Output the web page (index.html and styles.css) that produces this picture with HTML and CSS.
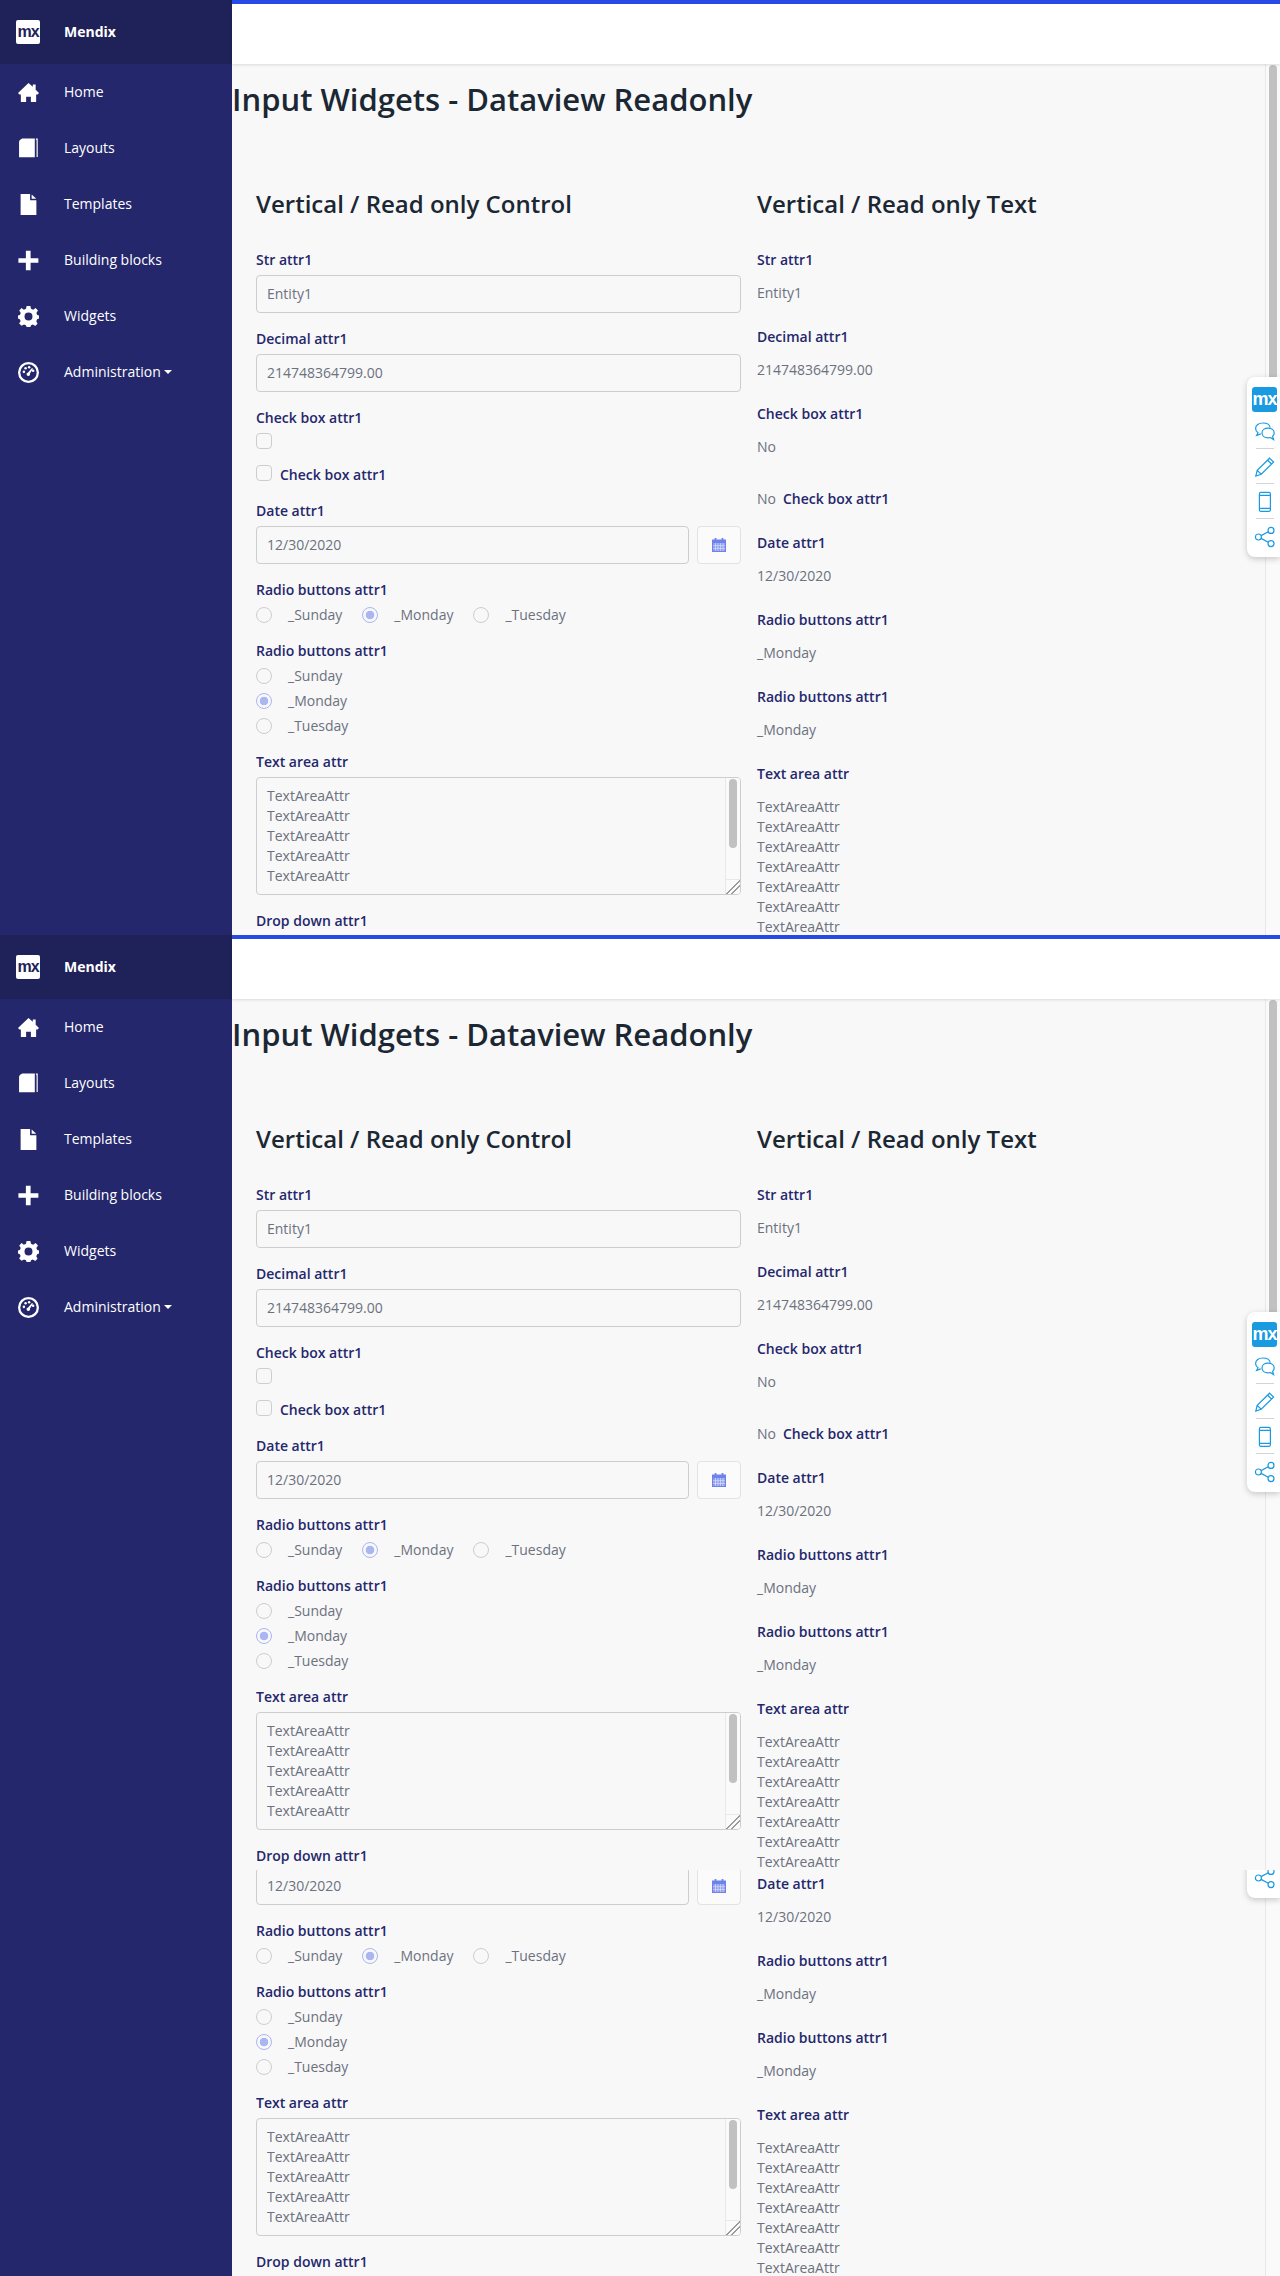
FILE: index.html
```html
<!DOCTYPE html>
<html lang="en">
<head>
<meta charset="utf-8">
<title>Input Widgets - Dataview Readonly</title>
<link rel="stylesheet" href="styles.css">
</head>
<body>
<svg class="defs" width="0" height="0" aria-hidden="true">
  <symbol id="i-home" viewBox="0 0 22 20"><path d="M11 0 L15.5 4 V1.5 H18.5 V7 L22 10.5 L20.5 12 H19 V20 H13.5 V14.5 H8.5 V20 H3 V12 H1.5 L0 10.5 Z"/></symbol>
  <symbol id="i-book" viewBox="0 0 20 20"><path d="M4 0.5 H16 V18.4 H1 V3.6 Q1 1.6 4 0.5 Z"/><path d="M17 0.5 H18.8 V18 H17.7 V1.7 H17 Z"/></symbol>
  <symbol id="i-doc" viewBox="0 0 16 20"><path d="M0.5 0 H9.5 V6 H15.5 V20 H0.5 Z M11 0.4 L15.4 4.6 H11 Z"/></symbol>
  <symbol id="i-plus" viewBox="0 0 20 20"><path d="M7.5 0.6 H12 V7.8 H19.4 V12.2 H12 V19.4 H7.5 V12.2 H0.4 V7.8 H7.5 Z"/></symbol>
  <symbol id="i-gear" viewBox="0 0 20 20"><path fill-rule="evenodd" d="M8.2 0 H11.8 L12.4 2.7 L14.4 3.5 L16.8 2 L19 4.3 L17.5 6.6 L18.3 8.6 L20 9 V12 L18.2 12.6 L17.4 14.5 L18.6 16.8 L16.4 19 L14.2 17.6 L12.4 18.3 L11.8 20 H8.2 L7.6 18.3 L5.7 17.5 L3.4 18.9 L1.1 16.6 L2.5 14.4 L1.7 12.5 L0 12 V9 L1.8 8.5 L2.6 6.6 L1.2 4.4 L3.4 2 L5.6 3.5 L7.6 2.7 Z M10 6.2 A3.8 3.8 0 1 0 10 13.8 A3.8 3.8 0 1 0 10 6.2 Z"/></symbol>
  <symbol id="i-dash" viewBox="0 0 20 20"><path fill-rule="evenodd" d="M10 0 A10 10 0 1 1 10 20 A10 10 0 1 1 10 0 Z M10 2.2 A7.8 7.8 0 1 0 10 17.8 A7.8 7.8 0 1 0 10 2.2 Z"/><circle cx="5.6" cy="9.4" r="1.2"/><circle cx="7.2" cy="6" r="1.2"/><circle cx="10.6" cy="5" r="1.2"/><circle cx="14.4" cy="8.4" r="1.2"/><path d="M13.3 5.7 L14.3 6.4 L11.4 11 A1.7 1.7 0 1 1 9.6 9.9 Z"/></symbol>
  <symbol id="i-cal" viewBox="0 0 14 14"><path fill-rule="evenodd" d="M2.6 0 H4.4 V1.4 H9.6 V0 H11.4 V1.4 H14 V14 H0 V1.4 H2.6 Z M1 5 V13 H13 V5 Z"/><path d="M1 5 H13 V13 H1 Z" opacity=".78"/><path d="M3.5 5 V13 M6 5 V13 M8.5 5 V13 M11 5 V13 M1 7.7 H13 M1 10.4 H13" stroke="#f8f8f8" stroke-width=".5" fill="none"/></symbol>
  <symbol id="i-chat" viewBox="0 0 22 22"><path d="M9 2 C4.6 2 1.6 4.4 1.6 7.6 C1.6 9.4 2.6 10.8 4 11.7 L2.6 14.4 L6.8 12.9 M9 2 C13 2 15.8 3.9 16.2 6.6"/><path d="M14 7.2 C10.6 7.2 8 9.2 8 12 C8 14.8 10.6 16.8 14 16.8 C14.8 16.8 15.6 16.7 16.2 16.5 L19.6 18.6 L18.6 15.4 C19.6 14.5 20.2 13.3 20.2 12 C20.2 9.2 17.6 7.2 14 7.2 Z"/></symbol>
  <symbol id="i-pencil" viewBox="0 0 22 22"><path d="M15.6 2.2 L19.6 6 L7.2 18.2 L1.8 20 L3.2 14.4 Z M13.6 4.2 L17.6 8 M3.2 14.4 L7.2 18.2"/></symbol>
  <symbol id="i-phone" viewBox="0 0 22 22"><rect x="5.4" y="1.4" width="11" height="19" rx="1.6"/><path d="M5.4 4.4 H16.4 M5.4 17.4 H16.4"/></symbol>
  <symbol id="i-share" viewBox="0 0 22 22"><circle cx="4.4" cy="11" r="3"/><circle cx="17" cy="4.4" r="3"/><circle cx="17" cy="17.6" r="3"/><path d="M7.1 9.6 L14.3 5.8 M7.1 12.4 L14.3 16.2"/></symbol>
</svg>

<div class="page">
  <section class="screen">
    <aside class="sidebar">
      <div class="brand"><span class="brand-logo">mx</span><span class="brand-name">Mendix</span></div>
      <nav class="nav">
        <a class="nav-item"><svg class="nav-icon"><use href="#i-home"/></svg>Home</a>
        <a class="nav-item"><svg class="nav-icon"><use href="#i-book"/></svg>Layouts</a>
        <a class="nav-item"><svg class="nav-icon"><use href="#i-doc"/></svg>Templates</a>
        <a class="nav-item"><svg class="nav-icon"><use href="#i-plus"/></svg>Building blocks</a>
        <a class="nav-item"><svg class="nav-icon"><use href="#i-gear"/></svg>Widgets</a>
        <a class="nav-item"><svg class="nav-icon"><use href="#i-dash"/></svg>Administration<span class="caret"></span></a>
      </nav>
    </aside>
    <div class="main">
      <header class="topbar"></header>
      <div class="body">
        <main class="content">
          <h1 class="title">Input Widgets - Dataview Readonly</h1>
          <div class="columns columns-head">
            <div class="col">
              <h2 class="heading">Vertical / Read only Control</h2>
              <div class="field"><label class="label">Str attr1</label><div class="input">Entity1</div></div>
              <div class="field"><label class="label">Decimal attr1</label><div class="input">214748364799.00</div></div>
              <div class="field"><label class="label">Check box attr1</label><div class="check-only"><span class="checkbox"></span></div></div>
              <div class="field check-row"><span class="checkbox"></span><label class="label">Check box attr1</label></div>
              <div class="field"><label class="label">Date attr1</label><div class="date-row"><div class="input grow">12/30/2020</div><span class="cal-btn"><svg class="cal-icon"><use href="#i-cal"/></svg></span></div></div>
              <div class="field"><label class="label">Radio buttons attr1</label><div class="radios-h"><span class="radio-opt"><span class="radio"></span>_Sunday</span><span class="radio-opt"><span class="radio on"></span>_Monday</span><span class="radio-opt"><span class="radio"></span>_Tuesday</span></div></div>
              <div class="field"><label class="label">Radio buttons attr1</label><div class="radios-v"><span class="radio-opt"><span class="radio"></span>_Sunday</span><span class="radio-opt"><span class="radio on"></span>_Monday</span><span class="radio-opt"><span class="radio"></span>_Tuesday</span></div></div>
              <div class="field"><label class="label">Text area attr</label><div class="textarea">TextAreaAttr<br>TextAreaAttr<br>TextAreaAttr<br>TextAreaAttr<br>TextAreaAttr<span class="ta-bar"><span class="ta-thumb"></span><span class="ta-grip"></span></span></div></div>
              <div class="field"><label class="label">Drop down attr1</label></div>
            </div>
            <div class="col col-text">
              <h2 class="heading">Vertical / Read only Text</h2>
              <div class="field"><label class="label">Str attr1</label><p class="value">Entity1</p></div>
              <div class="field"><label class="label">Decimal attr1</label><p class="value">214748364799.00</p></div>
              <div class="field"><label class="label">Check box attr1</label><p class="value">No</p></div>
              <div class="field inline-value"><span class="plain">No</span><label class="label">Check box attr1</label></div>
              <div class="field"><label class="label">Date attr1</label><p class="value">12/30/2020</p></div>
              <div class="field"><label class="label">Radio buttons attr1</label><p class="value">_Monday</p></div>
              <div class="field"><label class="label">Radio buttons attr1</label><p class="value">_Monday</p></div>
              <div class="field"><label class="label">Text area attr</label><p class="value">TextAreaAttr<br>TextAreaAttr<br>TextAreaAttr<br>TextAreaAttr<br>TextAreaAttr<br>TextAreaAttr<br>TextAreaAttr</p></div>
            </div>
          </div>
        </main>
        <div class="scrollbar"><span class="scroll-thumb"></span></div>
        <div class="dock">
          <span class="dock-logo">mx</span>
          <svg class="dock-icon"><use href="#i-chat"/></svg>
          <span class="dock-sep"></span>
          <svg class="dock-icon"><use href="#i-pencil"/></svg>
          <span class="dock-sep"></span>
          <svg class="dock-icon"><use href="#i-phone"/></svg>
          <span class="dock-sep"></span>
          <svg class="dock-icon"><use href="#i-share"/></svg>
        </div>
      </div>
    </div>
  </section>

  <section class="screen">
    <aside class="sidebar">
      <div class="brand"><span class="brand-logo">mx</span><span class="brand-name">Mendix</span></div>
      <nav class="nav">
        <a class="nav-item"><svg class="nav-icon"><use href="#i-home"/></svg>Home</a>
        <a class="nav-item"><svg class="nav-icon"><use href="#i-book"/></svg>Layouts</a>
        <a class="nav-item"><svg class="nav-icon"><use href="#i-doc"/></svg>Templates</a>
        <a class="nav-item"><svg class="nav-icon"><use href="#i-plus"/></svg>Building blocks</a>
        <a class="nav-item"><svg class="nav-icon"><use href="#i-gear"/></svg>Widgets</a>
        <a class="nav-item"><svg class="nav-icon"><use href="#i-dash"/></svg>Administration<span class="caret"></span></a>
      </nav>
    </aside>
    <div class="main">
      <header class="topbar"></header>
      <div class="body">
        <main class="content">
          <h1 class="title">Input Widgets - Dataview Readonly</h1>
          <div class="columns columns-head">
            <div class="col">
              <h2 class="heading">Vertical / Read only Control</h2>
              <div class="field"><label class="label">Str attr1</label><div class="input">Entity1</div></div>
              <div class="field"><label class="label">Decimal attr1</label><div class="input">214748364799.00</div></div>
              <div class="field"><label class="label">Check box attr1</label><div class="check-only"><span class="checkbox"></span></div></div>
              <div class="field check-row"><span class="checkbox"></span><label class="label">Check box attr1</label></div>
              <div class="field"><label class="label">Date attr1</label><div class="date-row"><div class="input grow">12/30/2020</div><span class="cal-btn"><svg class="cal-icon"><use href="#i-cal"/></svg></span></div></div>
              <div class="field"><label class="label">Radio buttons attr1</label><div class="radios-h"><span class="radio-opt"><span class="radio"></span>_Sunday</span><span class="radio-opt"><span class="radio on"></span>_Monday</span><span class="radio-opt"><span class="radio"></span>_Tuesday</span></div></div>
              <div class="field"><label class="label">Radio buttons attr1</label><div class="radios-v"><span class="radio-opt"><span class="radio"></span>_Sunday</span><span class="radio-opt"><span class="radio on"></span>_Monday</span><span class="radio-opt"><span class="radio"></span>_Tuesday</span></div></div>
              <div class="field"><label class="label">Text area attr</label><div class="textarea">TextAreaAttr<br>TextAreaAttr<br>TextAreaAttr<br>TextAreaAttr<br>TextAreaAttr<span class="ta-bar"><span class="ta-thumb"></span><span class="ta-grip"></span></span></div></div>
              <div class="field"><label class="label">Drop down attr1</label></div>
            </div>
            <div class="col col-text">
              <h2 class="heading">Vertical / Read only Text</h2>
              <div class="field"><label class="label">Str attr1</label><p class="value">Entity1</p></div>
              <div class="field"><label class="label">Decimal attr1</label><p class="value">214748364799.00</p></div>
              <div class="field"><label class="label">Check box attr1</label><p class="value">No</p></div>
              <div class="field inline-value"><span class="plain">No</span><label class="label">Check box attr1</label></div>
              <div class="field"><label class="label">Date attr1</label><p class="value">12/30/2020</p></div>
              <div class="field"><label class="label">Radio buttons attr1</label><p class="value">_Monday</p></div>
              <div class="field"><label class="label">Radio buttons attr1</label><p class="value">_Monday</p></div>
              <div class="field"><label class="label">Text area attr</label><p class="value">TextAreaAttr<br>TextAreaAttr<br>TextAreaAttr<br>TextAreaAttr<br>TextAreaAttr<br>TextAreaAttr<br>TextAreaAttr</p></div>
            </div>
          </div>
        </main>
        <div class="scrollbar"><span class="scroll-thumb"></span></div>
        <div class="dock">
          <span class="dock-logo">mx</span>
          <svg class="dock-icon"><use href="#i-chat"/></svg>
          <span class="dock-sep"></span>
          <svg class="dock-icon"><use href="#i-pencil"/></svg>
          <span class="dock-sep"></span>
          <svg class="dock-icon"><use href="#i-phone"/></svg>
          <span class="dock-sep"></span>
          <svg class="dock-icon"><use href="#i-share"/></svg>
        </div>
      </div>
    </div>
  </section>

  <section class="screen tail">
    <aside class="sidebar"></aside>
    <div class="main">
      <div class="body">
        <main class="content">
          <div class="columns">
            <div class="col col-tail-left">
              <div class="field"><div class="date-row"><div class="input grow">12/30/2020</div><span class="cal-btn"><svg class="cal-icon"><use href="#i-cal"/></svg></span></div></div>
              <div class="field"><label class="label">Radio buttons attr1</label><div class="radios-h"><span class="radio-opt"><span class="radio"></span>_Sunday</span><span class="radio-opt"><span class="radio on"></span>_Monday</span><span class="radio-opt"><span class="radio"></span>_Tuesday</span></div></div>
              <div class="field"><label class="label">Radio buttons attr1</label><div class="radios-v"><span class="radio-opt"><span class="radio"></span>_Sunday</span><span class="radio-opt"><span class="radio on"></span>_Monday</span><span class="radio-opt"><span class="radio"></span>_Tuesday</span></div></div>
              <div class="field"><label class="label">Text area attr</label><div class="textarea">TextAreaAttr<br>TextAreaAttr<br>TextAreaAttr<br>TextAreaAttr<br>TextAreaAttr<span class="ta-bar"><span class="ta-thumb"></span><span class="ta-grip"></span></span></div></div>
              <div class="field"><label class="label">Drop down attr1</label></div>
            </div>
            <div class="col col-text col-tail-right">
              <div class="field"><label class="label">Date attr1</label><p class="value">12/30/2020</p></div>
              <div class="field"><label class="label">Radio buttons attr1</label><p class="value">_Monday</p></div>
              <div class="field"><label class="label">Radio buttons attr1</label><p class="value">_Monday</p></div>
              <div class="field"><label class="label">Text area attr</label><p class="value">TextAreaAttr<br>TextAreaAttr<br>TextAreaAttr<br>TextAreaAttr<br>TextAreaAttr<br>TextAreaAttr<br>TextAreaAttr</p></div>
            </div>
          </div>
        </main>
        <div class="scrollbar"></div>
        <div class="dock">
          <span class="dock-logo"></span>
          <svg class="dock-icon"></svg>
          <span class="dock-sep"></span>
          <svg class="dock-icon"></svg>
          <span class="dock-sep"></span>
          <svg class="dock-icon"></svg>
          <span class="dock-sep"></span>
          <svg class="dock-icon"><use href="#i-share"/></svg>
        </div>
      </div>
    </div>
  </section>
</div>
</body>
</html>
```
FILE: styles.css
```css
* { box-sizing: border-box; }
html, body { margin: 0; padding: 0; background: #f8f8f8; }
body { font-family: "Open Sans", "Noto Sans", sans-serif; font-size: 14px; line-height: 20px; color: #6c717e; }
.defs { position: absolute; }
.page { width: 1280px; }

.screen { display: flex; height: 935px; overflow: hidden; }
.screen.tail { height: 406px; }

.sidebar { width: 232px; flex: none; background: #24276c; color: #fff; }
.brand { display: flex; align-items: center; height: 64px; background: #1f2259; padding-left: 16px; }
.brand-logo { display: block; width: 24px; height: 24px; margin-right: 24px; border-radius: 2px; background: #fff; color: #1f2259; font-family: "Liberation Sans", sans-serif; font-size: 16px; font-weight: 700; line-height: 23px; text-align: center; letter-spacing: -1px; }
.brand-name { font-weight: 700; }
.nav-item { display: flex; align-items: center; height: 56px; padding-left: 18px; color: #fff; }
.nav-icon { width: 21px; height: 21px; margin-right: 25px; fill: #fff; flex: none; }
.caret { display: inline-block; margin-left: 3px; border-left: 4px solid transparent; border-right: 4px solid transparent; border-top: 4px solid #fff; }

.main { flex: 1; min-width: 0; display: flex; flex-direction: column; }
.topbar { height: 64px; flex: none; background: #fff; border-top: 4px solid #264ae5; box-shadow: 0 1px 3px rgba(0,0,0,.12); position: relative; z-index: 1; }
.body { flex: 1; min-height: 0; display: flex; position: relative; }
.content { flex: 1; min-width: 0; overflow: hidden; }

.title { margin: 15px 0 0; font-size: 31px; line-height: 40px; font-weight: 600; color: #1b2733; }
.columns { display: flex; gap: 16px; padding-left: 24px; }
.columns-head { margin-top: 70px; }
.col { width: 485px; flex: none; }
.col-text { width: 490px; }
.col-tail-left { margin-top: -3px; }
.col-tail-right { padding-top: 4px; }
.heading { margin: 0 0 31px; font-size: 24px; line-height: 30px; font-weight: 600; color: #1b2733; }

.field { margin-bottom: 16px; }
.label { display: block; margin-bottom: 5px; font-weight: 600; color: #24276c; }

.input { height: 38px; padding: 8px 8px 8px 10px; border: 1px solid #cdcdcd; border-radius: 4px; line-height: 20px; background: #f8f8f8; }
.grow { flex: 1; }
.date-row { display: flex; gap: 8px; }
.cal-btn { width: 44px; flex: none; height: 38px; display: flex; align-items: center; justify-content: center; background: #fbfbfb; border: 1px solid #e2e2e2; border-radius: 4px; }
.cal-icon { width: 14px; height: 14px; fill: #6d82ec; }

.check-only { height: 16px; }
.checkbox { display: block; width: 16px; height: 16px; border: 1px solid #cdcdcd; border-radius: 4px; flex: none; }
.check-row { display: flex; align-items: flex-start; gap: 8px; }
.check-row .label { margin: 0; }

.radios-h { display: flex; gap: 20px; }
.radios-v { display: flex; flex-direction: column; gap: 5px; }
.radio-opt { display: flex; align-items: center; gap: 16px; height: 20px; }
.radio { display: block; width: 16px; height: 16px; flex: none; border: 1px solid #cdcdcd; border-radius: 50%; }
.radio.on { border-color: #a9b6f2; background: radial-gradient(circle, #a9b6f2 0 4px, transparent 4.6px); }

.textarea { position: relative; height: 118px; padding: 8px 10px; border: 1px solid #cdcdcd; border-radius: 4px; overflow: hidden; }
.ta-bar { position: absolute; top: 0; right: 0; bottom: 0; width: 15px; background: #fafafa; border-left: 1px solid #e8e8e8; }
.ta-thumb { position: absolute; left: 3px; top: 1px; width: 8px; height: 69px; border-radius: 4px; background: #c1c1c1; }
.ta-grip { position: absolute; right: 0; bottom: 0; width: 15px; height: 15px; border-top: 1px solid #e8e8e8; background: linear-gradient(135deg, transparent 50%, #9a9a9a 50% 56%, transparent 56% 68%, #9a9a9a 68% 74%, transparent 74%); }

.value { margin: 0; padding: 8px 0; }
.inline-value { display: flex; gap: 7px; padding-top: 8px; height: 36px; }
.inline-value .label { margin: 0; }
.plain { display: block; }

.scrollbar { width: 15px; flex: none; position: relative; background: #fafafa; border-left: 1px solid #e8e8e8; }
.scroll-thumb { position: absolute; left: 3px; top: 1px; width: 8px; height: 330px; border-radius: 4px; background: #c1c1c1; }

.dock { position: absolute; right: 0; top: 313px; width: 33px; height: 180px; padding: 10px 3px 0 5px; background: #fff; border-radius: 8px 0 0 8px; box-shadow: 0 2px 6px rgba(0,0,0,.2); display: flex; flex-direction: column; align-items: center; z-index: 2; }
.tail .dock { top: -152px; }
.dock-logo { display: block; width: 25px; height: 25px; flex: none; margin-bottom: 2px; border-radius: 3px; background: #1a9ae0; color: #fff; font-family: "Liberation Sans", sans-serif; font-size: 18px; font-weight: 700; line-height: 24px; text-align: center; letter-spacing: -1px; }
.dock-icon { display: block; width: 22px; height: 22px; flex: none; margin-top: 7px; fill: none; stroke: #1a9ae0; stroke-width: 1.2; }
.dock-sep { display: block; width: 18px; height: 1px; flex: none; margin-top: 5px; background: #d4d4d4; }
```
